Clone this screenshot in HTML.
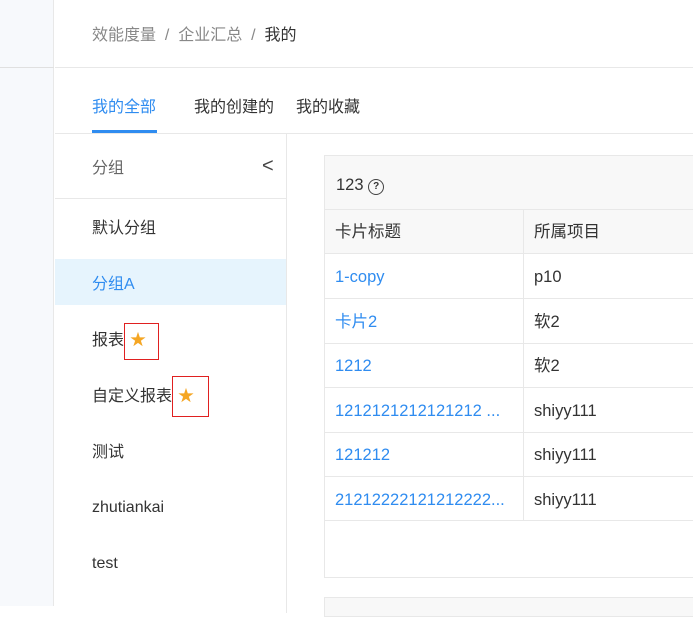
<!DOCTYPE html>
<html><head><meta charset="utf-8"><style>
*{margin:0;padding:0;box-sizing:border-box}
body{width:693px;height:606px;overflow:hidden;background:#fff;font-family:"Liberation Sans","Noto Sans CJK SC",sans-serif;font-size:16px;color:#333;position:relative}
.a{position:absolute}
.side{left:0;top:0;width:54px;height:606px;background:#f7f9fc;border-right:1px solid #e8e8e8}
.row{left:324px;width:380px;border-bottom:1px solid #e8e8e8;height:45px;line-height:46px;font-size:16.5px}
.c1{position:absolute;left:11px;color:#2f8cf0}
.c2{position:absolute;left:210px}
.li{left:92px;line-height:20px}
.star{color:#f5a623;font-size:16px;position:absolute}
.box{border:1.5px solid #e02020}
</style></head><body>
<div class="a side"></div>
<div class="a" style="left:0;top:67px;width:54px;border-top:1px solid #e0e0e0"></div>
<div class="a" style="left:92px;top:21px;color:#888">效能度量 &nbsp;/&nbsp; 企业汇总 &nbsp;/&nbsp; <span style="color:#333">我的</span></div>
<div class="a" style="left:55px;top:67px;width:640px;border-top:1px solid #e8e8e8"></div>
<div class="a" style="left:92px;top:93px;color:#2f8cf0">我的全部</div>
<div class="a" style="left:92px;top:130px;width:65px;height:3px;background:#2f8cf0"></div>
<div class="a" style="left:194px;top:93px">我的创建的</div>
<div class="a" style="left:296px;top:93px">我的收藏</div>
<div class="a" style="left:55px;top:133px;width:640px;border-top:1px solid #e8e8e8"></div>
<div class="a" style="left:286px;top:133px;height:480px;border-left:1px solid #e8e8e8"></div>
<div class="a li" style="top:159px;color:#666">分组</div>
<div class="a" style="left:262px;top:155px;font-size:20px;color:#444">&lt;</div>
<div class="a" style="left:55px;top:198px;width:231px;border-top:1px solid #e8e8e8"></div>
<div class="a li" style="top:219px">默认分组</div>
<div class="a" style="left:55px;top:259px;width:231px;height:46px;background:#e6f4fd"></div>
<div class="a li" style="top:275px;color:#2f8cf0">分组A</div>
<div class="a li" style="top:331px">报表</div>
<span class="star" style="left:130px;top:326px">★</span>
<div class="a box" style="left:124px;top:323px;width:35px;height:37px"></div>
<div class="a li" style="top:387px">自定义报表</div>
<span class="star" style="left:178px;top:382px">★</span>
<div class="a box" style="left:172px;top:376px;width:37px;height:41px"></div>
<div class="a li" style="top:443px">测试</div>
<div class="a li" style="top:498px">zhutiankai</div>
<div class="a li" style="top:554px">test</div>
<div class="a" style="left:324px;top:155px;width:380px;height:423px;border:1px solid #e8e8e8"></div>
<div class="a" style="left:325px;top:156px;width:370px;height:98px;background:#f8f8f8"></div>
<div class="a" style="left:336px;top:176px;font-size:16.5px">123 <span style="display:inline-block;width:16px;height:16px;border:1.5px solid #444;border-radius:50%;font-size:10px;line-height:13px;text-align:center;vertical-align:1px;font-weight:bold">?</span></div>
<div class="a" style="left:324px;top:209px;width:380px;border-top:1px solid #e8e8e8"></div>
<div class="a" style="left:523px;top:209px;height:312px;border-left:1px solid #e8e8e8"></div>
<div class="a row" style="top:209px"><span class="c1" style="color:#333">卡片标题</span><span class="c2">所属项目</span></div>
<div class="a row" style="top:254px"><span class="c1">1-copy</span><span class="c2">p10</span></div>
<div class="a row" style="top:299px"><span class="c1">卡片2</span><span class="c2">软2</span></div>
<div class="a row" style="top:343px"><span class="c1">1212</span><span class="c2">软2</span></div>
<div class="a row" style="top:388px"><span class="c1">1212121212121212 ...</span><span class="c2">shiyy111</span></div>
<div class="a row" style="top:432px"><span class="c1">121212</span><span class="c2">shiyy111</span></div>
<div class="a row" style="top:477px;height:44px"><span class="c1">21212222121212222...</span><span class="c2">shiyy111</span></div>
<div class="a" style="left:324px;top:597px;width:380px;height:20px;border:1px solid #e8e8e8;background:#f8f8f8"></div>
</body></html>
